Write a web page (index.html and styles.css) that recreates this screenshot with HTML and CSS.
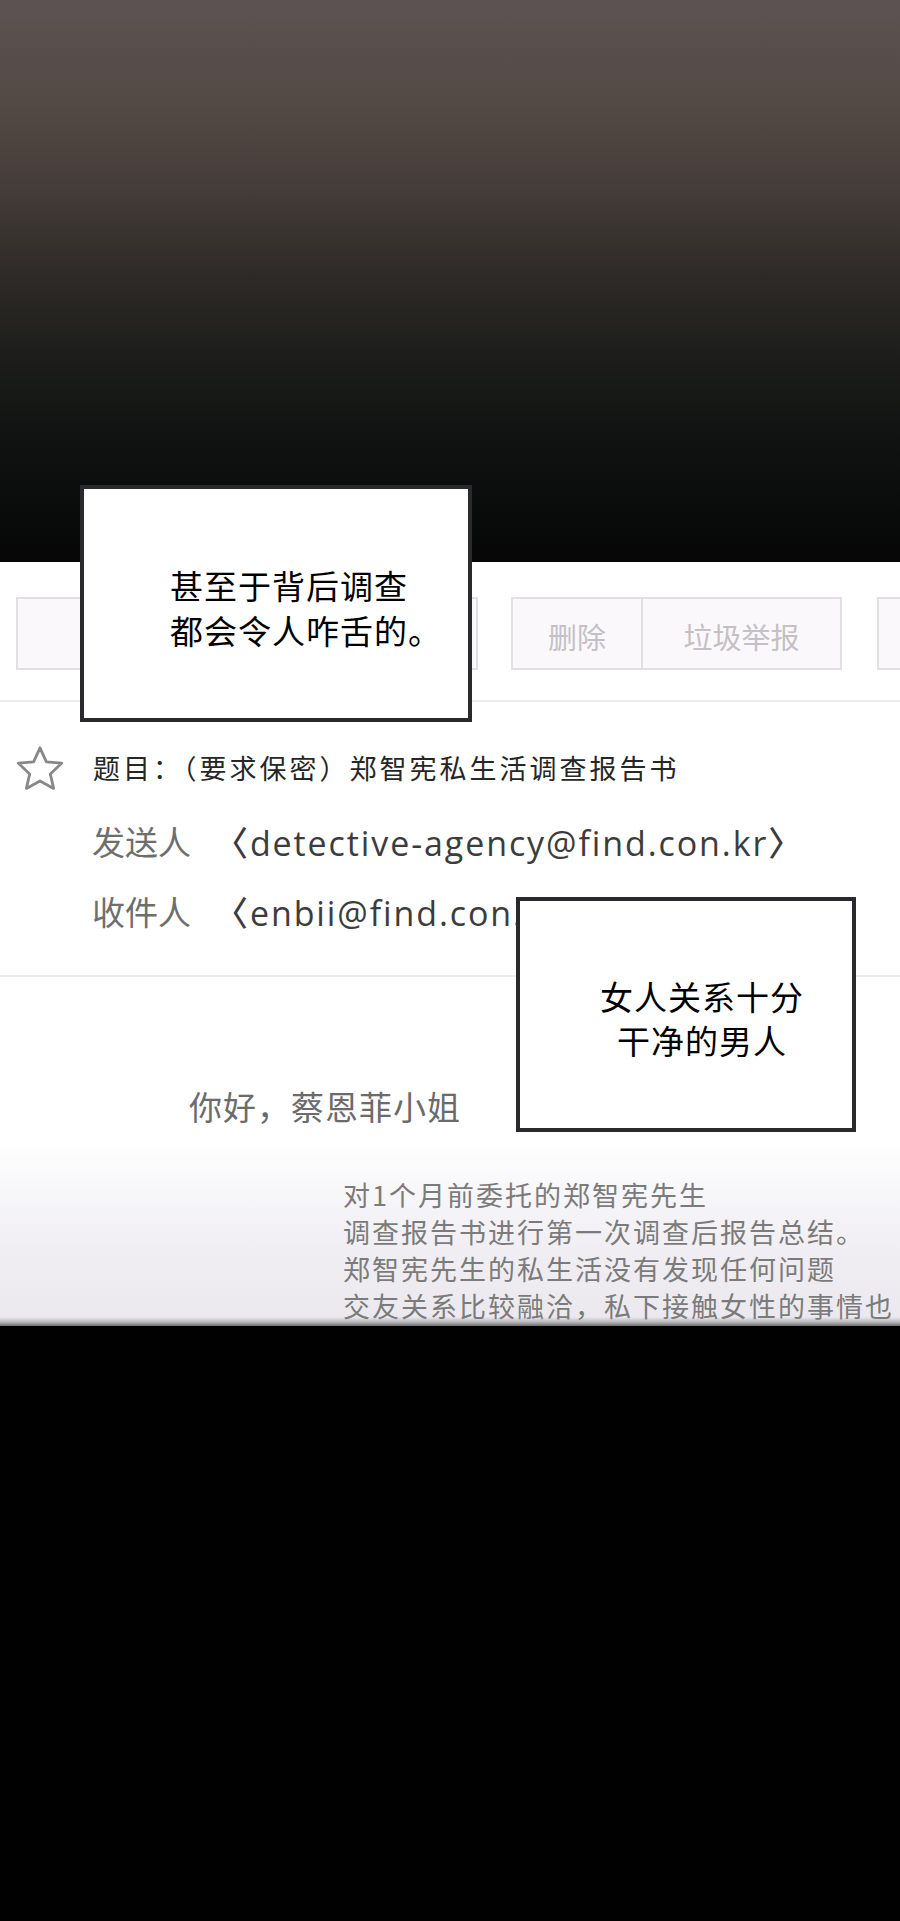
FILE: index.html
```html
<!DOCTYPE html>
<html lang="zh-CN">
<head>
<meta charset="utf-8">
<title>邮件</title>
<link rel="stylesheet" href="styles.css">
</head>
<body>
<div class="page">
  <div class="sky"></div>
  <div class="mail">
    <div class="toolbar">
      <div class="btn btn-wide"><span class="dash"></span></div>
      <div class="btn-group">
        <div class="btn btn-del">删除</div>
        <div class="btn btn-spam">垃圾举报</div>
      </div>
      <div class="btn btn-more"></div>
    </div>
    <div class="rule rule-top"></div>
    <div class="header">
      <div class="subject-row">
        <svg class="star" viewBox="0 0 46 44" width="46" height="44">
          <path d="M23 1.8 L29.4 15.9 L44.6 17.2 L33.3 27.9 L36.6 42.4 L23 35 L9.4 42.4 L12.7 27.9 L1.4 17.2 L16.6 15.9 Z" fill="none" stroke="#888" stroke-width="2.8" stroke-linejoin="round"/>
        </svg>
        <span class="subject">题目：（要求保密）郑智宪私生活调查报告书</span>
      </div>
      <div class="addr-row sender">
        <span class="label">发送人</span>
        <span class="addr">〈detective-agency@find.con.kr〉</span>
      </div>
      <div class="addr-row recipient">
        <span class="label">收件人</span>
        <span class="addr">〈enbii@find.con.kr〉</span>
      </div>
    </div>
    <div class="rule rule-mid"></div>
    <div class="content">
      <p class="greeting">你好，蔡恩菲小姐</p>
      <div class="report">
        <p>对1个月前委托的郑智宪先生</p>
        <p>调查报告书进行第一次调查后报告总结。</p>
        <p>郑智宪先生的私生活没有发现任何问题</p>
        <p>交友关系比较融洽，私下接触女性的事情也</p>
      </div>
    </div>
  </div>
  <div class="void"></div>

  <div class="bubble bubble-one">
    <p>甚至于背后调查</p>
    <p>都会令人咋舌的。</p>
  </div>
  <div class="bubble bubble-two">
    <p>女人关系十分</p>
    <p>干净的男人</p>
  </div>
</div>
</body>
</html>
```

FILE: styles.css
```css
* { box-sizing: border-box; }

html, body {
  margin: 0;
  padding: 0;
  background: #000;
}

body {
  font-family: "Noto Sans CJK SC", "Noto Sans", sans-serif;
}

p { margin: 0; }

.page {
  position: relative;
  width: 900px;
  height: 1921px;
  overflow: hidden;
}

.sky {
  height: 562px;
  background: linear-gradient(to bottom,
    #5c5352 0%,
    #534a46 18%,
    #443c38 34%,
    #2e2a27 49%,
    #1e1f1c 62%,
    #121413 76%,
    #0a0b0b 90%,
    #060606 100%);
}

.mail {
  height: 764px;
  background: linear-gradient(to bottom,
    #ffffff 0px,
    #ffffff 580px,
    #f7f6f9 630px,
    #f0eef2 690px,
    #ebe9ee 755px,
    #b9b8bb 760px,
    #6e6e6e 764px);
  display: flex;
  flex-direction: column;
}

/* toolbar */
.toolbar {
  margin-top: 35px;
  height: 73px;
  display: flex;
  align-items: stretch;
}

.btn {
  flex: none;
  border: 2px solid #e2e0e3;
  background: #faf8fb;
  color: #c4c0c5;
  font-size: 29px;
  display: flex;
  align-items: center;
  justify-content: center;
}

.btn-wide {
  margin-left: 16px;
  width: 462px;
  justify-content: flex-start;
}

.dash {
  display: block;
  margin-left: 131px;
  width: 22px;
  height: 2px;
  background: #dcdcdc;
}

.btn-group {
  flex: none;
  margin-left: 33px;
  display: flex;
}

.btn-del {
  width: 132px;
  padding-top: 4px;
}

.btn-spam {
  width: 199px;
  border-left: none;
  padding-top: 4px;
}

.btn-more {
  margin-left: 35px;
  width: 60px;
}

.rule {
  height: 2px;
  background: #ececec;
  flex: none;
}

.rule-top { margin-top: 30px; }

/* header */
.header {
  display: flex;
  flex-direction: column;
}

.subject-row {
  margin-top: 44px;
  height: 44px;
  display: flex;
  align-items: center;
  padding-left: 17px;
}

.star {
  flex: none;
  overflow: visible;
  filter: blur(0.6px);
}

.subject {
  margin-left: 30px;
  font-size: 27px;
  letter-spacing: 3px;
  color: #262626;
  line-height: 44px;
  white-space: nowrap;
}

.addr-row {
  height: 44px;
  display: flex;
  align-items: center;
  white-space: nowrap;
}

.sender { margin-top: 29px; }
.recipient { margin-top: 26px; }

.label {
  width: 214px;
  padding-left: 92px;
  font-size: 33px;
  color: #6e6e6e;
  flex: none;
}

.addr {
  font-family: "Open Sans", "Noto Sans", "Noto Sans CJK SC", sans-serif;
  font-size: 34px;
  font-weight: 500;
  letter-spacing: 1.9px;
  color: #3c3c3c;
}

.rule-mid { margin-top: 42px; }

/* body */
.content {
  flex: 1;
}

.greeting {
  margin-top: 107px;
  padding-left: 189px;
  font-size: 33px;
  line-height: 44px;
  letter-spacing: 1px;
  color: #6b6b6b;
}

.report {
  margin-top: 48px;
  padding-left: 343px;
  font-size: 27px;
  line-height: 37px;
  letter-spacing: 2px;
  color: #7b7b7b;
  white-space: nowrap;
}

.void {
  height: 595px;
  background: #010101;
}

/* speech boxes laid over the panel */
.bubble {
  position: absolute;
  background: #fff;
  border: 4px solid #2a2a2e;
  color: #000;
  font-size: 33px;
  letter-spacing: 1px;
  white-space: nowrap;
}

.bubble-one {
  left: 80px;
  top: 485px;
  width: 392px;
  height: 237px;
  padding: 74px 0 0 86px;
  line-height: 45px;
}

.bubble-two {
  left: 516px;
  top: 897px;
  width: 340px;
  height: 235px;
  padding: 73px 0 0 32px;
  line-height: 44px;
  text-align: center;
}
```
